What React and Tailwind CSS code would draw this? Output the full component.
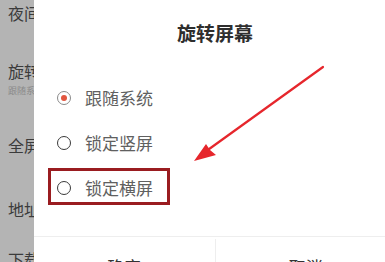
import React from 'react';

const cjk = { fontFamily: '"Noto Sans CJK SC", "Noto Sans", sans-serif' };

function Radio({ checked }) {
  return (
    <span className={`flex h-[14px] w-[14px] items-center justify-center rounded-full border-[1.5px] ${checked ? 'border-[#8a8a8a]' : 'border-[#3a3a3a]'}`}>
      {checked && <span className="h-[6px] w-[6px] rounded-full bg-[#e2563f]" />}
    </span>
  );
}

export default function App() {
  const options = [
    { label: '跟随系统', checked: true },
    { label: '锁定竖屏', checked: false },
    { label: '锁定横屏', checked: false },
  ];

  return (
    <div className="relative h-[262px] w-[385px] overflow-hidden bg-[#b4b4b4]" style={cjk}>
      {/* background settings list (dimmed) */}
      <div className="flex flex-col pl-[8px] text-[16px] text-[#3b3b3b]">
        <div className="h-[28px] leading-[26px]">夜间模式</div>
        <div className="mt-[31px] leading-[24px]">旋转屏幕</div>
        <div className="mt-[3px] text-[9px] leading-[10px] text-[#8a8a8a]">跟随系统</div>
        <div className="mt-[37px] leading-[24px]">全屏阅读</div>
        <div className="mt-[40px] leading-[24px]">地址栏</div>
        <div className="mt-[26px] leading-[24px]">下载管理</div>
      </div>

      {/* dialog */}
      <div className="absolute left-[34px] top-0 flex h-[300px] w-[362px] flex-col bg-white">
        <div className="pt-[20px] text-center text-[19px] font-bold leading-[26px] text-[#2e2e2e]">旋转屏幕</div>
        <div className="mt-[29px] flex flex-col">
          {options.map((o) => (
            <div key={o.label} className="flex h-[45px] items-center gap-[14px] pl-[23px]">
              <Radio checked={o.checked} />
              <span className="text-[17px] text-[#606060]">{o.label}</span>
            </div>
          ))}
        </div>
        <div className="mt-[26px] h-px bg-[#eeeeee]" />
        <div className="flex flex-1">
          <div className="flex h-[60px] flex-1 items-center justify-center text-[17px] text-[#333]">确定</div>
          <div className="mt-[2px] w-px bg-[#eeeeee]" />
          <div className="flex h-[60px] flex-1 items-center justify-center text-[17px] text-[#333]">取消</div>
        </div>
      </div>

      {/* highlight box */}
      <div className="absolute left-[48px] top-[168px] h-[37px] w-[122px] border-[3px] border-[#9a1c20]" />

      {/* arrow */}
      <svg className="absolute left-0 top-0" width="385" height="262" viewBox="0 0 385 262">
        <path d="M323 67 L205 152" stroke="#e6262c" strokeWidth="2.2" strokeLinecap="round" fill="none" />
        <path d="M194 161 L206 144 L210 150 L216 155 Z" fill="#e6262c" />
      </svg>
    </div>
  );
}
